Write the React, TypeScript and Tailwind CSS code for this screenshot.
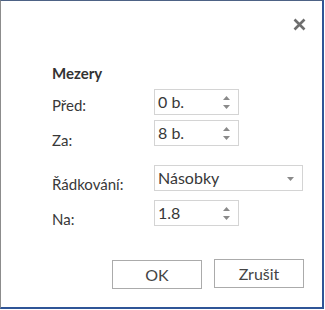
const font = { fontFamily: 'Lato, "Open Sans", sans-serif' };

function Spinner() {
  return (
    <div className="absolute right-[8px] top-0 flex h-full flex-col items-center justify-center gap-[5px]">
      <svg width="7" height="4" viewBox="0 0 7 4">
        <path d="M3.5 0 L7 4 L0 4 Z" fill="#8a8a8a" />
      </svg>
      <svg width="7" height="4" viewBox="0 0 7 4">
        <path d="M0 0 L7 0 L3.5 4 Z" fill="#8a8a8a" />
      </svg>
    </div>
  );
}

function NumberBox({ value }: { value: string }) {
  return (
    <div className="relative flex h-[26px] w-[85px] items-center border border-[#d4d4d4] bg-white pl-[3px] text-[16px] text-[#383838]">
      {value}
      <Spinner />
    </div>
  );
}

export default function App() {
  return (
    <div className="h-[310px] w-[325px] bg-white" style={font}>
      <div className="relative h-[309px] w-[324px] border-l border-t border-r-2 border-b-2 border-l-[#8c8c8c] border-t-[#4d6285] border-r-[#2f5597] border-b-[#2f5597] bg-white">
        <button className="absolute right-[16px] top-[16px] flex h-[14px] w-[14px] items-center justify-center">
          <svg width="13" height="13" viewBox="0 0 13 13">
            <path d="M1.5 1.5 L11.5 11.5 M11.5 1.5 L1.5 11.5" stroke="#6e6e6e" strokeWidth="2.6" />
          </svg>
        </button>

        <div className="pl-[51px] pt-[62px] text-[15px] text-[#383838]">
          <div className="text-[15px] font-bold leading-[20px] text-[#333]">Mezery</div>

          <div className="mt-[6px] flex flex-col gap-[5px]">
            <div className="flex">
              <div className="w-[102px] pt-[6px] leading-[20px]">Před:</div>
              <NumberBox value="0 b." />
            </div>
            <div className="flex">
              <div className="w-[102px] pt-[10px] leading-[20px]">Za:</div>
              <NumberBox value="8 b." />
            </div>
          </div>

          <div className="mt-[15px] flex flex-col gap-[6px]">
            <div className="flex">
              <div className="w-[102px] pt-[9px] leading-[20px]">Řádkování:</div>
              <div className="relative flex h-[26px] w-[149px] items-center border border-[#d4d4d4] bg-white pl-[3px] text-[16px] text-[#383838]">
                Násobky
                <svg className="absolute right-[8px] top-[11px]" width="7" height="4" viewBox="0 0 7 4">
                  <path d="M0 0 L7 0 L3.5 4 Z" fill="#8a8a8a" />
                </svg>
              </div>
            </div>
            <div className="flex">
              <div className="w-[102px] pt-[9px] leading-[20px]">Na:</div>
              <NumberBox value="1.8" />
            </div>
          </div>
        </div>

        <div className="absolute bottom-[19px] right-[18px] flex items-end gap-[12px]">
          <button className="mb-[-1px] h-[29px] w-[90px] border border-[#ababab] bg-white text-[16px] text-[#444]">
            OK
          </button>
          <button className="h-[29px] w-[90px] border border-[#ababab] bg-white text-[16px] text-[#444]">
            Zrušit
          </button>
        </div>
      </div>
    </div>
  );
}
